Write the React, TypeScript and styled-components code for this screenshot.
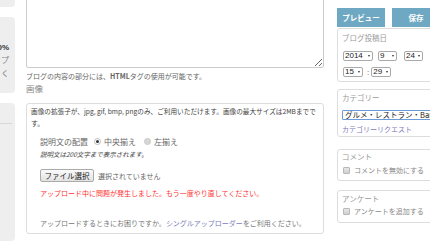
import React from "react";
import styled, { createGlobalStyle } from "styled-components";

const Global = createGlobalStyle`
  html, body { margin: 0; padding: 0; background: #fff; overflow: hidden; }
  body { font-family: "Noto Sans CJK JP", sans-serif; color: #555; }
`;

const Page = styled.div`
  display: flex;
  align-items: flex-start;
  width: 430px;
  height: 249px;
  overflow: hidden;
`;

const LeftCol = styled.div`
  flex: none;
  width: 115px;
  margin-left: -100px;
  display: flex;
  flex-direction: column;
`;

const SidePanel = styled.div<{ $top: number; $h: number }>`
  background: #eeeeee;
  border-radius: 4px;
  margin-top: ${(p) => p.$top}px;
  height: ${(p) => p.$h}px;
  padding: 0 6px 0 0;
  box-sizing: border-box;
  text-align: right;
  overflow: hidden;
`;

const SideBig = styled.div`
  margin-top: 26px;
  height: 10px;
  font: bold 8px/10px "Liberation Sans", sans-serif;
  color: #333;
  white-space: nowrap;
`;

const SideLine = styled.div`
  height: 12px;
  font-size: 8px;
  line-height: 12px;
  color: #888;
  white-space: nowrap;
  margin-top: 1px;
`;

const SideRule = styled.div`
  margin: 20px -3px 0 0;
  border-top: 1px solid #d8d8d8;
`;

const MainCol = styled.div`
  flex: none;
  width: 298px;
  margin-left: 11px;
  display: flex;
  flex-direction: column;
`;

const TextArea = styled.textarea`
  display: block;
  box-sizing: border-box;
  width: 298px;
  height: 78px;
  margin: -10px 0 0 0;
  border: 1px solid #cccccc;
  border-radius: 2px;
  resize: vertical;
  outline: none;
`;

const Hint = styled.div`
  margin-top: 3px;
  height: 10px;
  font-size: 7px;
  line-height: 10px;
  color: #666;
  white-space: nowrap;
  b { font-weight: bold; }
`;

const SectionLabel = styled.div`
  margin-top: 1px;
  height: 12px;
  font-size: 8.5px;
  line-height: 12px;
  color: #888;
`;

const InfoBox = styled.div`
  margin-top: 9px;
  border: 1px solid #dddddd;
  border-radius: 3px;
  padding: 1px 4px 5px 4px;
  color: #555;
`;

const InfoLine = styled.div<{ $size: number }>`
  height: 12px;
  font-size: ${(p) => p.$size}px;
  line-height: 12px;
  color: #444;
  white-space: nowrap;
`;

const Indent = styled.div`
  padding-left: 9px;
`;

const AlignRow = styled.div`
  margin-top: 6px;
  display: flex;
  align-items: center;
  height: 12px;
  font-size: 8px;
  color: #666;
  white-space: nowrap;
`;

const Radio = styled.span<{ $on?: boolean }>`
  display: inline-block;
  box-sizing: border-box;
  width: 7px;
  height: 7px;
  border-radius: 50%;
  background: ${(p) => (p.$on ? "#fff" : "#d6d6d6")};
  border: 1px solid ${(p) => (p.$on ? "#bbb" : "#c8c8c8")};
  position: relative;
  margin: 0 3px 0 ${(p) => (p.$on ? "6px" : "8px")};
  &::after {
    content: "";
    display: ${(p) => (p.$on ? "block" : "none")};
    position: absolute;
    left: 1px;
    top: 1px;
    width: 3px;
    height: 3px;
    border-radius: 50%;
    background: #333;
  }
`;

const Note = styled.div`
  margin-top: 2px;
  height: 10px;
  font-size: 6.5px;
  line-height: 10px;
  font-style: italic;
  color: #444;
`;

const FileRow = styled.div`
  margin-top: 10px;
  display: flex;
  align-items: center;
  gap: 4px;
  height: 13px;
  font-size: 7px;
  color: #666;
`;

const FileButton = styled.button`
  box-sizing: border-box;
  height: 13px;
  width: 54px;
  padding: 0;
  font: 7.5px/11px "Noto Sans CJK JP", sans-serif;
  color: #222;
  background: linear-gradient(#fafafa, #e2e2e2);
  border: 1px solid #aaa;
  border-radius: 2px;
`;

const ErrorText = styled.div`
  margin-top: 6px;
  height: 10px;
  font-size: 7px;
  line-height: 10px;
  color: #ff3333;
  white-space: nowrap;
`;

const HelpText = styled.div`
  margin-top: 20px;
  height: 10px;
  font-size: 7px;
  line-height: 10px;
  color: #777;
  white-space: nowrap;
`;

const Link = styled.span`
  color: #7b7bbd;
`;

const RightCol = styled.div`
  flex: none;
  width: 120px;
  margin-left: 13px;
  display: flex;
  flex-direction: column;
`;

const ButtonRow = styled.div`
  margin-top: 8px;
  display: flex;
  gap: 7px;
`;

const ActionButton = styled.div`
  width: 48px;
  height: 19px;
  flex: none;
  background: #6ea8c2;
  color: #fff;
  font-size: 7.5px;
  font-weight: bold;
  display: flex;
  align-items: center;
  justify-content: center;
`;

const Panel = styled.div<{ $top: number; $pt: number; $pb: number }>`
  margin-top: ${(p) => p.$top}px;
  border: 1px solid #dddddd;
  border-radius: 3px;
  padding: ${(p) => p.$pt}px 4px ${(p) => p.$pb}px 4px;
`;

const PanelLabel = styled.div`
  height: 12px;
  font-size: 7.5px;
  line-height: 12px;
  color: #999;
  white-space: nowrap;
`;

const SelectRow = styled.div<{ $top: number }>`
  margin-top: ${(p) => p.$top}px;
  display: flex;
  align-items: center;
  height: 10px;
`;

const Select = styled.div<{ $w: number; $ml?: number }>`
  box-sizing: border-box;
  width: ${(p) => p.$w}px;
  height: 10px;
  margin-left: ${(p) => p.$ml ?? 0}px;
  border: 1px solid #a9a9a9;
  border-radius: 2px;
  background: #fff;
  display: flex;
  align-items: center;
  justify-content: space-between;
  padding: 0 2px 0 1px;
  font: 8px/8px "Liberation Sans", sans-serif;
  color: #222;
  &::after {
    content: "";
    width: 0;
    height: 0;
    border-left: 1.5px solid transparent;
    border-right: 1.5px solid transparent;
    border-top: 2px solid #333;
  }
`;

const Colon = styled.span`
  font: 8px "Liberation Sans", sans-serif;
  color: #555;
  margin-left: 4px;
`;

const CategoryInput = styled.div`
  margin-top: 6px;
  box-sizing: border-box;
  height: 10px;
  width: 130px;
  border: 1px solid #6b9bd6;
  border-radius: 1px;
  font-size: 7.5px;
  line-height: 8px;
  color: #222;
  padding-left: 2px;
  white-space: nowrap;
  overflow: hidden;
`;

const PanelLink = styled.div`
  margin-top: 3px;
  height: 12px;
  font-size: 7px;
  line-height: 12px;
  color: #7b7bbd;
  white-space: nowrap;
`;

const CheckRow = styled.div<{ $top: number }>`
  margin-top: ${(p) => p.$top}px;
  display: flex;
  align-items: center;
  gap: 4px;
  height: 12px;
  font-size: 7px;
  color: #888;
  white-space: nowrap;
`;

const Check = styled.span`
  box-sizing: border-box;
  width: 7px;
  height: 7px;
  margin-left: 1px;
  border: 1px solid #b8b8b8;
  border-radius: 1px;
  background: linear-gradient(#e6e6e6, #cfcfcf);
`;

export default function App() {
  return (
    <>
      <Global />
      <Page>
        <LeftCol>
          <SidePanel $top={-20} $h={27} />
          <SidePanel $top={10} $h={76}>
            <SideBig>30%</SideBig>
            <SideLine>アップ</SideLine>
            <SideLine>く</SideLine>
          </SidePanel>
          <SidePanel $top={10} $h={138}>
            <SideRule />
          </SidePanel>
        </LeftCol>

        <MainCol>
          <TextArea defaultValue="" />
          <Hint>
            ブログの内容の部分には、<b>HTML</b>タグの使用が可能です。
          </Hint>
          <SectionLabel>画像</SectionLabel>
          <InfoBox>
            <InfoLine $size={6.65}>
              画像の拡張子が、jpg, gif, bmp, pngのみ、ご利用いただけます。画像の最大サイズは2MBまでで
            </InfoLine>
            <InfoLine $size={7}>す。</InfoLine>
            <Indent>
              <AlignRow>
                説明文の配置
                <Radio $on />
                中央揃え
                <Radio />
                左揃え
              </AlignRow>
              <Note>説明文は200文字まで表示されます。</Note>
              <FileRow>
                <FileButton type="button">ファイル選択</FileButton>
                選択されていません
              </FileRow>
              <ErrorText>
                アップロード中に問題が発生しました。もう一度やり直してください。
              </ErrorText>
              <HelpText>
                アップロードするときにお困りですか。
                <Link>シングルアップローダー</Link>をご利用ください。
              </HelpText>
            </Indent>
          </InfoBox>
        </MainCol>

        <RightCol>
          <ButtonRow>
            <ActionButton>プレビュー</ActionButton>
            <ActionButton>保存</ActionButton>
          </ButtonRow>
          <Panel $top={1} $pt={3} $pb={4}>
            <PanelLabel>ブログ投稿日</PanelLabel>
            <SelectRow $top={7}>
              <Select $w={30} $ml={1}>2014</Select>
              <Select $w={19} $ml={5}>9</Select>
              <Select $w={19} $ml={7}>24</Select>
            </SelectRow>
            <SelectRow $top={6}>
              <Select $w={20} $ml={1}>15</Select>
              <Colon>:</Colon>
              <Select $w={20} $ml={2}>29</Select>
            </SelectRow>
          </Panel>
          <Panel $top={7} $pt={2} $pb={1}>
            <PanelLabel>カテゴリー</PanelLabel>
            <CategoryInput>グルメ・レストラン・Bar・et</CategoryInput>
            <PanelLink>カテゴリーリクエスト</PanelLink>
          </Panel>
          <Panel $top={12} $pt={1} $pb={4}>
            <PanelLabel>コメント</PanelLabel>
            <CheckRow $top={1}>
              <Check />
              コメントを無効にする
            </CheckRow>
          </Panel>
          <Panel $top={9} $pt={2} $pb={5}>
            <PanelLabel>アンケート</PanelLabel>
            <CheckRow $top={0}>
              <Check />
              アンケートを追加する
            </CheckRow>
          </Panel>
        </RightCol>
      </Page>
    </>
  );
}
